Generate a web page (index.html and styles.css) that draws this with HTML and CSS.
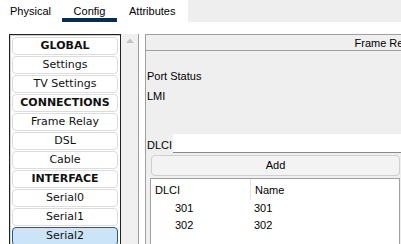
FILE: index.html
```html
<!DOCTYPE html>
<html>
<head>
<meta charset="utf-8">
<link rel="stylesheet" href="styles.css">
</head>
<body>
<div class="tabbar">
  <div class="tabs">
    <div class="tab">Physical</div>
    <div class="tab active">Config</div>
    <div class="tab">Attributes</div>
  </div>
  <div class="tabfill"></div>
</div>
<div class="main">
  <div class="listbox">
    <div class="list">
      <div class="item head">GLOBAL</div>
      <div class="item">Settings</div>
      <div class="item">TV Settings</div>
      <div class="item head">CONNECTIONS</div>
      <div class="item">Frame Relay</div>
      <div class="item">DSL</div>
      <div class="item">Cable</div>
      <div class="item head">INTERFACE</div>
      <div class="item">Serial0</div>
      <div class="item">Serial1</div>
      <div class="item sel">Serial2</div>
    </div>
    <div class="scroll">
      <svg width="10" height="8" viewBox="0 0 10 8" class="arrow"><path d="M1 6 L5 1.5 L9 6 Z" fill="#c4c4c4"/></svg>
    </div>
  </div>
  <div class="panel">
    <div class="phead">Frame Relay</div>
    <div class="pbody">
      <div class="lbl first">Port Status</div>
      <div class="lbl">LMI</div>
      <div class="dlcirow">
        <span class="dlbl">DLCI</span>
        <div class="input"></div>
      </div>
      <div class="btn">Add</div>
      <div class="table">
        <div class="trow thead">
          <div class="c1">DLCI</div>
          <div class="c2">Name</div>
        </div>
        <div class="trow">
          <div class="c1 num">301</div>
          <div class="c2">301</div>
        </div>
        <div class="trow">
          <div class="c1 num">302</div>
          <div class="c2">302</div>
        </div>
      </div>
    </div>
  </div>
</div>
</body>
</html>
```

FILE: styles.css
```css
html, body {
  margin: 0;
  padding: 0;
  background: #ffffff;
  width: 401px;
  height: 244px;
  overflow: hidden;
  font-family: "Liberation Sans", Arial, sans-serif;
  font-size: 11px;
  color: #000;
}
.tabbar {
  display: flex;
  height: 22px;
}
.tabs {
  display: flex;
  width: 188px;
  background: #fff;
}
.tab {
  height: 22px;
  box-sizing: border-box;
  padding-top: 5px;
  line-height: 13px;
}
.tab:nth-child(1) { margin-left: 10px; width: 52px; }
.tab:nth-child(2) { width: 55px; text-align: center; }
.tab:nth-child(3) { margin-left: 12px; }
.tab.active {
  border-bottom: 4px solid #0c2b52;
}
.tabfill {
  flex: 1;
  background: #eeeeee;
}
.main {
  display: flex;
  margin-top: 12px;
  padding-left: 9px;
}
.listbox {
  display: flex;
  width: 130px;
  height: 210px;
}
.list {
  width: 112px;
  border: 1px solid #222;
  border-bottom: none;
  box-sizing: border-box;
  padding: 2px 1px 0 2px;
  background: #fff;
  box-shadow: inset 1px 1px 0 #d0d0d0;
  font-family: "DejaVu Sans", Verdana, sans-serif;
  font-size: 11px;
  overflow: hidden;
}
.item {
  height: 18px;
  margin-bottom: 1px;
  margin-right: 1px;
  border: 1px solid #dcdcdc;
  border-radius: 4px;
  box-sizing: border-box;
  text-align: center;
  line-height: 16px;
  color: #111;
  background: #fff;
}
.item.head { font-weight: bold; }
.item.sel {
  background: #cce4f7;
  border-color: #2a5a8c;
  height: 19px;
}
.scroll {
  width: 17px;
  background: #f0f0f0;
  border-right: 1px solid #a0a0a0;
  display: flex;
  justify-content: center;
  padding-top: 3px;
}
.arrow { display: block; }
.panel {
  margin-left: 6px;
  width: 480px;
  flex: none;
  height: 209px;
  background: #efefef;
  border-left: 1px solid #a0a0a0;
  border-top: 1px solid #a0a0a0;
  overflow: hidden;
}
.phead {
  height: 15px;
  line-height: 16px;
  text-align: center;
  border-bottom: 1px solid #a0a0a0;
}
.pbody {
  padding-left: 1px;
}
.lbl {
  height: 14px;
  line-height: 14px;
  margin-bottom: 6px;
}
.lbl.first { margin-top: 18px; }
.dlcirow {
  display: flex;
  align-items: flex-end;
  margin-top: 31px;
  height: 19px;
  width: 254px;
}
.dlbl {
  width: 26px;
  line-height: 14px;
  padding-bottom: 1px;
}
.input {
  flex: 1;
  height: 18px;
  background: #fff;
  border-bottom: 1px solid #8a8a8a;
}
.btn {
  margin: 2px 0 0 4px;
  height: 19px;
  line-height: 19px;
  text-align: center;
  border: 1px solid #cfcfcf;
  border-radius: 4px;
  background: #f3f3f3;
  width: 247px;
}
.table {
  margin: 2px 0 0 3px;
  background: #fff;
  border: 1px solid #a0a0a0;
  height: 80px;
  width: 248px;
}
.trow {
  display: flex;
  height: 17px;
  line-height: 17px;
}
.thead {
  height: 21px;
  line-height: 22px;
}
.c1 {
  width: 95px;
  padding-left: 4px;
}
.thead .c1 {
  border-right: 1px solid #e4e4e4;
}
.c2 {
  padding-left: 4px;
}
.num {
  padding-left: 24px;
  width: 75px;
}
```
